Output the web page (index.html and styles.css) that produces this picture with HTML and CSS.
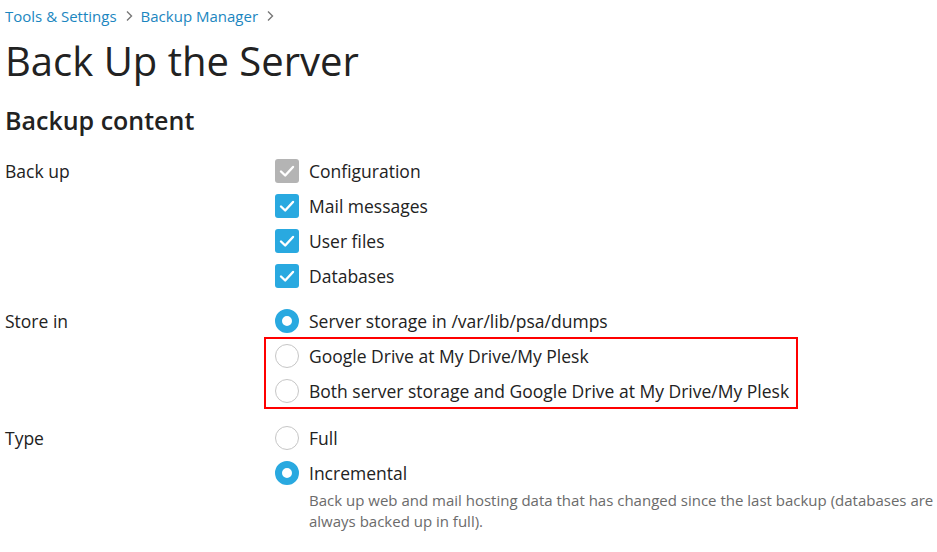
FILE: index.html
```html
<!DOCTYPE html>
<html>
<head>
<meta charset="utf-8">
<link rel="stylesheet" href="styles.css">
</head>
<body>
<div class="page">
  <nav class="crumbs">
    <a class="crumb">Tools &amp; Settings</a>
    <svg class="chev" viewBox="0 0 8 12" width="8" height="12"><path d="M2 1.5 L6.5 6 L2 10.5" fill="none" stroke="#777" stroke-width="1.4"/></svg>
    <a class="crumb">Backup Manager</a>
    <svg class="chev" viewBox="0 0 8 12" width="8" height="12"><path d="M2 1.5 L6.5 6 L2 10.5" fill="none" stroke="#777" stroke-width="1.4"/></svg>
  </nav>
  <h1 class="title">Back Up the Server</h1>
  <h2 class="section">Backup content</h2>

  <div class="form">
    <div class="field">
      <div class="label">Back up</div>
      <div class="controls">
        <div class="opt"><span class="cb cb-disabled"><svg viewBox="0 0 24 24"><path d="M6 12.5 L10.2 16.5 L18 8" fill="none" stroke="#fff" stroke-width="2.4" stroke-linecap="round" stroke-linejoin="round"/></svg></span><span>Configuration</span></div>
        <div class="opt"><span class="cb"><svg viewBox="0 0 24 24"><path d="M6 12.5 L10.2 16.5 L18 8" fill="none" stroke="#fff" stroke-width="2.4" stroke-linecap="round" stroke-linejoin="round"/></svg></span><span>Mail messages</span></div>
        <div class="opt"><span class="cb"><svg viewBox="0 0 24 24"><path d="M6 12.5 L10.2 16.5 L18 8" fill="none" stroke="#fff" stroke-width="2.4" stroke-linecap="round" stroke-linejoin="round"/></svg></span><span>User files</span></div>
        <div class="opt"><span class="cb"><svg viewBox="0 0 24 24"><path d="M6 12.5 L10.2 16.5 L18 8" fill="none" stroke="#fff" stroke-width="2.4" stroke-linecap="round" stroke-linejoin="round"/></svg></span><span>Databases</span></div>
      </div>
    </div>

    <div class="field">
      <div class="label">Store in</div>
      <div class="controls">
        <div class="opt"><span class="radio on"></span><span>Server storage in /var/lib/psa/dumps</span></div>
        <div class="highlight">
          <div class="opt"><span class="radio"></span><span>Google Drive at My Drive/My Plesk</span></div>
          <div class="opt"><span class="radio"></span><span>Both server storage and Google Drive at My Drive/My Plesk</span></div>
        </div>
      </div>
    </div>

    <div class="field field-type">
      <div class="label">Type</div>
      <div class="controls">
        <div class="opt"><span class="radio"></span><span>Full</span></div>
        <div class="opt"><span class="radio on"></span><span>Incremental</span></div>
        <p class="hint">Back up web and mail hosting data that has changed since the last backup (databases are always backed up in full).</p>
      </div>
    </div>
  </div>
</div>
</body>
</html>
```

FILE: styles.css
```css
html, body {
  margin: 0;
  padding: 0;
  background: #fff;
}
body {
  font-family: "Open Sans", "Noto Sans", sans-serif;
  color: #222;
}
.page {
  padding: 5px 0 0 5px;
}
.crumbs {
  display: flex;
  align-items: center;
  gap: 8px;
  height: 22px;
  font-size: 15px;
}
.crumb {
  color: #1b86c0;
}
.chev {
  display: block;
}
.title {
  margin: 10px 0 0 0;
  font-size: 40px;
  font-weight: 400;
  line-height: 48px;
}
.section {
  margin: 19px 0 0 0;
  font-size: 25px;
  font-weight: 600;
  line-height: 32px;
}
.form {
  margin-top: 17px;
  display: flex;
  flex-direction: column;
  gap: 10px;
}
.field {
  display: flex;
}
.field-type {
  margin-top: 2px;
}
.label {
  width: 265px;
  font-size: 17.5px;
  line-height: 36px;
  flex: none;
}
.controls {
  display: flex;
  flex-direction: column;
  flex: 1;
}
.opt {
  display: flex;
  align-items: center;
  gap: 10px;
  height: 35px;
  font-size: 17.5px;
  padding-left: 5px;
}
.highlight {
  margin-left: -5px;
  width: 532px;
  box-sizing: border-box;
  padding-left: 10px;
  outline: 2px solid #f00;
  outline-offset: -1px;
  display: flex;
  flex-direction: column;
}
.highlight .opt {
  padding-left: 0;
}
.cb {
  width: 24px;
  height: 24px;
  border-radius: 3px;
  background: #29a9e0;
  flex: none;
  display: block;
}
.cb svg {
  display: block;
  width: 24px;
  height: 24px;
}
.cb-disabled {
  background: #b4b4b4;
}
.radio {
  width: 24px;
  height: 24px;
  border-radius: 50%;
  box-sizing: border-box;
  border: 1px solid #c6c6c6;
  background: #fff;
  flex: none;
}
.radio.on {
  border: 7px solid #29a9e0;
}
.hint {
  margin: 0;
  padding-left: 39px;
  font-size: 15px;
  line-height: 21px;
  color: #6b6b6b;
}
```
